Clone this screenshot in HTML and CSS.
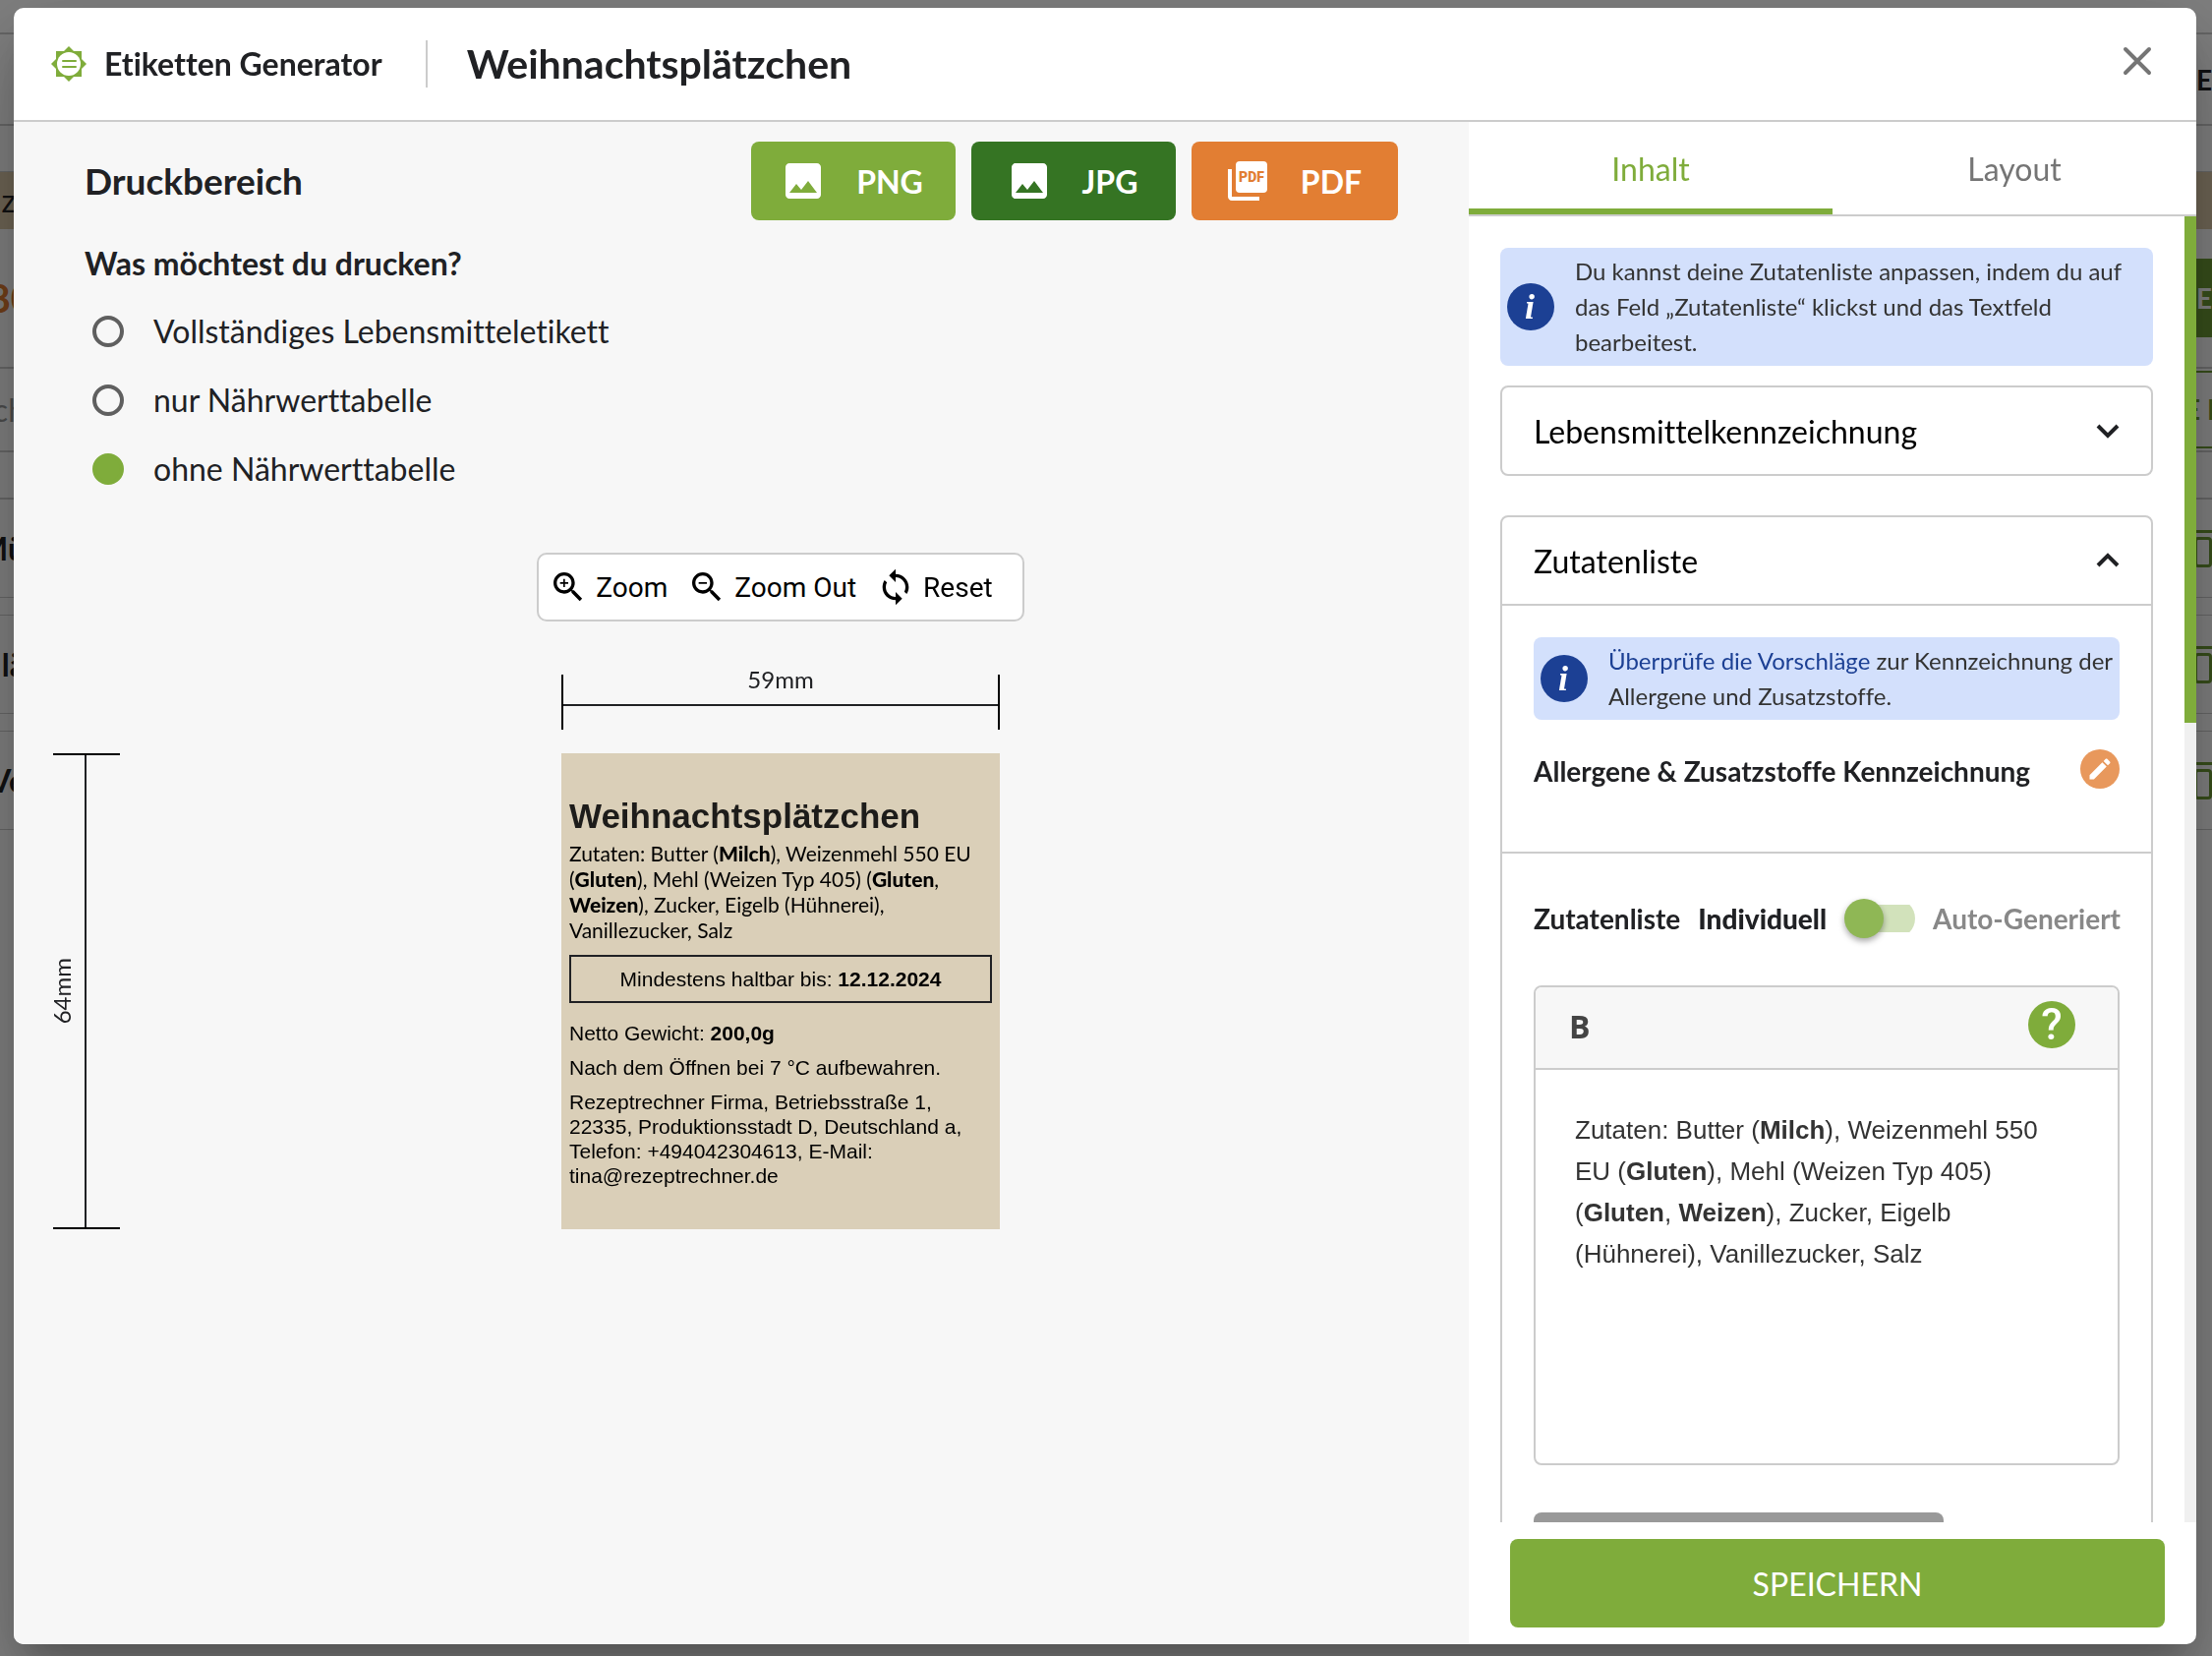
FILE: index.html
```html
<!DOCTYPE html>
<html lang="de">
<head>
<meta charset="utf-8">
<meta name="viewport" content="width=device-width, initial-scale=1">
<title>Etiketten Generator</title>
<link rel="stylesheet" href="styles.css">
</head>
<body>
<div class="page" aria-hidden="true">
  <div class="page-top"></div>
  <div class="page-row page-menu"><span class="page-start"></span><span class="page-end">ME</span></div>
  <div class="page-space"></div>
  <div class="page-row page-band"><span class="page-start">z</span></div>
  <div class="page-row page-hero"><span class="page-start">80</span><span class="page-end page-cta">E</span></div>
  <div class="page-row page-search"><span class="page-start">ch</span><span class="page-end page-outline">E I</span></div>
  <div class="page-space"></div>
  <div class="page-row page-item"><span class="page-start">Mü</span><span class="page-end page-chip"></span></div>
  <div class="page-row page-item"><span class="page-start">lä</span><span class="page-end page-chip"></span></div>
  <div class="page-row page-item"><span class="page-start">Ve</span><span class="page-end page-chip"></span></div>
</div>

<div class="backdrop">
<section class="modal" role="dialog" aria-modal="true" aria-labelledby="recipe">
  <header class="modal-header">
    <div class="brand">
      <svg class="brand-icon" viewBox="0 0 36 36" aria-hidden="true">
        <path fill="#7fac3b" d="M5 5h26v26H5z"/>
        <path fill="#7fac3b" d="M18 0l18 18-18 18L0 18z"/>
        <circle cx="18" cy="18" r="12" fill="#fff"/>
        <path d="M12 15h13M12 21h13" stroke="#7fac3b" stroke-width="2" stroke-linecap="round"/>
      </svg>
      <span>Etiketten Generator</span>
    </div>
    <h1 class="recipe" id="recipe">Weihnachtsplätzchen</h1>
    <button class="close" type="button" aria-label="Schließen">
      <svg viewBox="0 0 32 32"><path d="M4 4l24 24M28 4L4 28" fill="none" stroke="#757575" stroke-width="4" stroke-linecap="round"/></svg>
    </button>
  </header>

  <div class="modal-body">
    <main class="preview">
      <div class="preview-head">
        <h2 class="preview-title">Druckbereich</h2>
        <div class="exports">
          <button class="export export-png" type="button">
            <svg viewBox="0 0 24 24"><path fill="currentColor" d="M21 19V5c0-1.100-.9-2-2-2H5c-1.100 0-2 .9-2 2v14c0 1.100.9 2 2 2h14c1.100 0 2-.9 2-2zM8.500 13.500l2.500 3.010L14.500 12l4.500 6H5l3.500-4.500z"/></svg>
            <span>PNG</span>
          </button>
          <button class="export export-jpg" type="button">
            <svg viewBox="0 0 24 24"><path fill="currentColor" d="M21 19V5c0-1.100-.9-2-2-2H5c-1.100 0-2 .9-2 2v14c0 1.100.9 2 2 2h14c1.100 0 2-.9 2-2zM8.500 13.500l2.500 3.010L14.500 12l4.500 6H5l3.500-4.500z"/></svg>
            <span>JPG</span>
          </button>
          <button class="export export-pdf" type="button">
            <svg viewBox="0 0 48 48" aria-hidden="true">
              <rect x="12" y="4" width="32" height="32" rx="4" fill="currentColor"/>
              <path fill="currentColor" d="M8 12H4v28c0 2.200 1.800 4 4 4h28v-4H8z"/>
              <text class="pdf-mark" x="28" y="25" text-anchor="middle">PDF</text>
            </svg>
            <span>PDF</span>
          </button>
        </div>
      </div>

      <fieldset class="choices">
        <legend>Was möchtest du drucken?</legend>
        <label class="choice"><input type="radio" name="print"><span>Vollständiges Lebensmitteletikett</span></label>
        <label class="choice"><input type="radio" name="print"><span>nur Nährwerttabelle</span></label>
        <label class="choice"><input type="radio" name="print" checked><span>ohne Nährwerttabelle</span></label>
      </fieldset>

      <div class="toolbar">
        <button class="tool" type="button">
          <svg viewBox="0 0 24 24"><path d="M15.500 14h-.79l-.28-.27C15.410 12.590 16 11.110 16 9.500 16 5.910 13.090 3 9.500 3S3 5.910 3 9.500 5.910 16 9.500 16c1.610 0 3.090-.59 4.230-1.570l.27.28v.79l5 4.990L20.490 19l-4.990-5zm-6 0C7.010 14 5 11.990 5 9.500S7.010 5 9.500 5 14 7.010 14 9.500 11.990 14 9.500 14zm2.500-4h-2v2H9v-2H7V9h2V7h1v2h2v1z"/></svg>
          <span>Zoom</span>
        </button>
        <button class="tool" type="button">
          <svg viewBox="0 0 24 24"><path d="M15.500 14h-.79l-.28-.27C15.410 12.590 16 11.110 16 9.500 16 5.910 13.090 3 9.500 3S3 5.910 3 9.500 5.910 16 9.500 16c1.610 0 3.090-.59 4.230-1.570l.27.28v.79l5 4.990L20.490 19l-4.990-5zm-6 0C7.010 14 5 11.990 5 9.500S7.010 5 9.500 5 14 7.010 14 9.500 11.990 14 9.500 14zM7 9h5v1H7z"/></svg>
          <span>Zoom Out</span>
        </button>
        <button class="tool" type="button">
          <svg viewBox="0 0 24 24"><path d="M12 4V1L8 5l4 4V6c3.310 0 6 2.690 6 6 0 1.010-.25 1.970-.7 2.800l1.460 1.460C19.540 15.030 20 13.570 20 12c0-4.420-3.580-8-8-8zm0 14c-3.310 0-6-2.690-6-6 0-1.010.25-1.970.7-2.800L5.240 7.740C4.460 8.970 4 10.430 4 12c0 4.420 3.580 8 8 8v3l4-4-4-4v3z"/></svg>
          <span>Reset</span>
        </button>
      </div>

      <div class="stage">
        <div class="measure-x"><span>59mm</span><div class="ruler-x"></div></div>
        <div class="measure-y"><span>64mm</span><div class="ruler-y"></div></div>
        <article class="label">
          <h3 class="label-title">Weihnachtsplätzchen</h3>
          <p class="label-list">Zutaten: Butter (<b>Milch</b>), Weizenmehl 550 EU (<b>Gluten</b>), Mehl (Weizen Typ 405) (<b>Gluten</b>, <b>Weizen</b>), Zucker, Eigelb (Hühnerei), Vanillezucker, Salz</p>
          <p class="label-date">Mindestens haltbar bis: <b>12.12.2024</b></p>
          <p class="label-text">Netto Gewicht: <b>200,0g</b></p>
          <p class="label-text">Nach dem Öffnen bei 7 °C aufbewahren.</p>
          <p class="label-text">Rezeptrechner Firma, Betriebsstraße 1, 22335, Produktionsstadt D, Deutschland a, Telefon: +494042304613, E-Mail: tina@rezeptrechner.de</p>
        </article>
      </div>
    </main>

    <aside class="settings">
      <div class="tabs" role="tablist">
        <button class="tab tab-active" type="button" role="tab" aria-selected="true">Inhalt</button>
        <button class="tab" type="button" role="tab" aria-selected="false">Layout</button>
      </div>
      <div class="scroll-area">
        <div class="scroll-content">
          <div class="info">
            <svg class="info-icon" viewBox="0 0 48 48" aria-hidden="true"><circle cx="24" cy="24" r="24" fill="#1c4094"/><text x="23" y="36" text-anchor="middle">i</text></svg>
            <p>Du kannst deine Zutatenliste anpassen, indem du auf das Feld „Zutatenliste“ klickst und das Textfeld bearbeitest.</p>
          </div>

          <section class="panel">
            <button class="panel-head" type="button" aria-expanded="false">
              <span>Lebensmittelkennzeichnung</span>
              <svg viewBox="0 0 24 24" aria-hidden="true"><path d="M2 7l10 10L22 7"/></svg>
            </button>
          </section>

          <section class="panel panel-open">
            <button class="panel-head" type="button" aria-expanded="true">
              <span>Zutatenliste</span>
              <svg viewBox="0 0 24 24" aria-hidden="true"><path d="M2 17L12 7l10 10"/></svg>
            </button>
            <div class="panel-part">
              <div class="info">
                <svg class="info-icon" viewBox="0 0 48 48" aria-hidden="true"><circle cx="24" cy="24" r="24" fill="#1c4094"/><text x="23" y="36" text-anchor="middle">i</text></svg>
                <p><a href="#vorschlaege">Überprüfe die Vorschläge</a> zur Kennzeichnung der Allergene und Zusatzstoffe.</p>
              </div>
              <div class="edit-row">
                <h3>Allergene &amp; Zusatzstoffe Kennzeichnung</h3>
                <button class="edit" type="button" aria-label="Bearbeiten">
                  <svg viewBox="0 0 24 24"><path fill="#fff" d="M3 17.250V21h3.750L17.810 9.940l-3.750-3.750L3 17.250zM20.710 7.040c.39-.39.39-1.020 0-1.410l-2.340-2.340c-.39-.39-1.020-.39-1.410 0l-1.830 1.830 3.750 3.750 1.830-1.830z"/></svg>
                </button>
              </div>
            </div>
            <div class="panel-part panel-list">
              <div class="mode">
                <strong>Zutatenliste</strong>
                <label class="mode-switch">
                  <b>Individuell</b>
                  <input type="checkbox" role="switch">
                  <span class="mode-off">Auto-Generiert</span>
                </label>
              </div>
              <div class="editor">
                <div class="editor-bar">
                  <button class="bold" type="button" aria-label="Fett">B</button>
                  <button class="help" type="button" aria-label="Hilfe">?</button>
                </div>
                <div class="editor-text" contenteditable="true" spellcheck="false">Zutaten: Butter (<b>Milch</b>), Weizenmehl 550 EU (<b>Gluten</b>), Mehl (Weizen Typ 405) (<b>Gluten</b>, <b>Weizen</b>), Zucker, Eigelb (Hühnerei), Vanillezucker, Salz</div>
              </div>
              <button class="more" type="button" aria-label="Weitere Optionen"></button>
            </div>
          </section>
        </div>
        <div class="scrollbar" aria-hidden="true"><div class="scroll-thumb"></div></div>
      </div>
      <div class="save-bar"><button class="save" type="button">SPEICHERN</button></div>
    </aside>
  </div>
</section>
</div>
</body>
</html>
```

FILE: styles.css
```css
*,
*::before,
*::after {
  box-sizing: border-box;
}

body,
h1,
h2,
h3,
p,
fieldset {
  margin: 0;
  padding: 0;
  border: 0;
}

body {
  height: 100vh;
  overflow: hidden;
  background: #fff;
  color: #202124;
  font-family: Lato, "Liberation Sans", sans-serif;
  font-size: 32px;
  font-variant-ligatures: none;
}

button {
  padding: 0;
  border: 0;
  background: none;
  color: inherit;
  font: inherit;
  font-variant-ligatures: none;
  cursor: pointer;
}

svg {
  display: block;
  flex: none;
}

/* Page behind the dialog */
.page {
  height: 100vh;
  overflow: hidden;
  line-height: 32px;
}

.page-top {
  height: 35px;
  border-bottom: 2px solid #ccc;
}

.page-row {
  display: flex;
  align-items: center;
  justify-content: space-between;
  overflow: hidden;
}

.page-start {
  display: flex;
  justify-content: flex-end;
  width: 26px;
}

.page-end {
  width: 22px;
  overflow: hidden;
  white-space: nowrap;
}

.page-menu {
  height: 93px;
  border-bottom: 2px solid #ccc;
  font-size: 28px;
  font-weight: 700;
}

.page-menu .page-end {
  display: flex;
  justify-content: flex-end;
}

.page-space {
  height: 47px;
  border-bottom: 1px solid #ccc;
}

.page-band {
  height: 58px;
  background: #dbc8a8;
}

.page-band .page-start {
  width: 16px;
}

.page-hero {
  height: 140px;
  color: #e07c30;
  font-size: 40px;
  font-weight: 700;
}

.page-hero .page-start {
  width: 34px;
}

.page-cta {
  height: 80px;
  background: #6e9c35;
  color: #fff;
  font-size: 28px;
  line-height: 80px;
  text-align: right;
}

.page-search {
  height: 87px;
  border: solid #ccc;
  border-width: 2px 0;
  color: #999;
}

.page-outline {
  width: 28px;
  height: 79px;
  border: solid #6e9c35;
  border-width: 2px 0;
  color: #6e9c35;
  font-size: 28px;
  font-weight: 700;
  line-height: 75px;
}

.page-item {
  height: 101px;
  margin-bottom: 17px;
  border: solid #ccc;
  border-width: 1px 0;
  font-weight: 700;
}

.page-chip {
  width: 18px;
  height: 38px;
  padding-top: 4px;
  border-top: 3px solid #6e9c35;
}

.page-chip::before {
  display: block;
  height: 31px;
  border: 3px solid #6e9c35;
  border-radius: 4px;
  content: "";
}

/* Dialog */
.backdrop {
  position: fixed;
  inset: 0;
  display: flex;
  padding: 8px 16px 12px 14px;
  background: rgba(0, 0, 0, 0.5);
}

.modal {
  display: flex;
  flex: 1;
  flex-direction: column;
  overflow: hidden;
  border-radius: 10px;
  background: #fff;
  box-shadow:
    0 22px 30px -14px rgba(0, 0, 0, 0.2),
    0 48px 76px 6px rgba(0, 0, 0, 0.14),
    0 18px 92px 16px rgba(0, 0, 0, 0.12);
}

.modal-header {
  display: flex;
  align-items: center;
  padding: 32px 38px;
  border-bottom: 2px solid #ccc;
}

.brand {
  display: flex;
  align-items: center;
  gap: 18px;
  padding-right: 44px;
  border-right: 2px solid #ccc;
  font-weight: 700;
  line-height: 48px;
}

.brand-icon {
  width: 36px;
  height: 36px;
}

.recipe {
  flex: 1;
  padding-left: 40px;
  font-size: 41px;
  line-height: 50px;
}

.close {
  align-self: flex-start;
  padding: 6px;
}

.close svg {
  width: 32px;
  height: 32px;
}

.modal-body {
  display: grid;
  flex: 1;
  grid-template-columns: minmax(0, 2fr) minmax(0, 1fr);
  min-height: 0;
}

/* Preview */
.preview {
  display: flex;
  flex-direction: column;
  background: #f7f7f7;
}

.preview-head {
  display: flex;
  align-items: center;
  justify-content: space-between;
  padding: 20px 72px 0;
}

.preview-title {
  font-size: 37px;
  line-height: 48px;
}

.exports {
  display: flex;
  gap: 16px;
}

.export {
  display: flex;
  align-items: center;
  justify-content: center;
  gap: 30px;
  width: 208px;
  height: 80px;
  padding-right: 4px;
  border-radius: 8px;
  color: #fff;
  font-weight: 700;
}

.export svg {
  width: 48px;
  height: 48px;
}

.export-png {
  background: #7fac3b;
}

.export-jpg {
  background: #357423;
}

.export-pdf {
  width: 210px;
  background: #e27e33;
}

.pdf-mark {
  fill: #e27e33;
  font: 900 14px Roboto, sans-serif;
}

.choices {
  display: flex;
  flex-direction: column;
  gap: 30px;
  padding: 29px 72px 0;
}

.choices legend {
  padding: 24px 0 0;
  font-weight: 700;
  line-height: 40px;
}

.choice {
  display: flex;
  align-items: center;
  gap: 30px;
  padding-left: 8px;
  line-height: 40px;
}

.choice input {
  width: 32px;
  height: 32px;
  margin: 0;
  border: 4px solid #5f5f5f;
  border-radius: 50%;
  appearance: none;
}

.choice input:checked {
  border-color: #7fac3b;
  background: #7fac3b;
}

.toolbar {
  display: flex;
  align-items: center;
  align-self: center;
  gap: 20px;
  height: 70px;
  margin: 65px 0 0 80px;
  padding: 0 30px 0 10px;
  border: 2px solid #ccc;
  border-radius: 10px;
  background: #fff;
  color: #000;
  font-family: Roboto, sans-serif;
  font-size: 28px;
}

.tool {
  display: flex;
  align-items: center;
  gap: 8px;
}

.tool svg {
  width: 40px;
  height: 40px;
}

.stage {
  display: grid;
  grid-template-columns: 80px 1fr 446px 1fr;
  row-gap: 24px;
  padding: 44px 0 0;
  font-size: 24px;
}

.measure-x {
  display: flex;
  flex-direction: column;
  grid-column: 3;
  align-items: center;
  line-height: 30px;
}

.ruler-x {
  width: 100%;
  height: 56px;
  margin-top: -20px;
  border: solid #000;
  border-width: 0 2px;
  background: linear-gradient(#202124, #202124) center 30px / 100% 2px no-repeat;
}

.measure-y {
  display: flex;
  grid-column: 1 / 3;
  align-items: center;
  padding-left: 34px;
}

.measure-y span {
  line-height: 30px;
  writing-mode: vertical-rl;
  transform: rotate(180deg);
}

.ruler-y {
  align-self: stretch;
  width: 68px;
  margin-left: -24px;
  border: solid #000;
  border-width: 2px 0;
  background: linear-gradient(#202124, #202124) 32px 0 / 2px 100% no-repeat;
}

.label {
  display: flex;
  flex-direction: column;
  padding: 42px 8px 42px;
  background: #dacfb8;
  color: #000;
  font-family: "Liberation Sans", sans-serif;
  font-size: 21px;
  line-height: 25px;
}

.label-title {
  margin-bottom: 3px;
  color: #1d1c1a;
  font-size: 35px;
  line-height: 44px;
}

.label-list {
  font-family: Lato, sans-serif;
  line-height: 26px;
}

.label-list b,
.mode b {
  font-weight: 900;
}

.label-date {
  margin: 12px 0 8px;
  padding: 10px 0;
  border: 2px solid #202124;
  text-align: center;
}

.label-text {
  margin-top: 10px;
}

/* Settings */
.settings {
  display: flex;
  flex-direction: column;
  min-height: 0;
}

.tabs {
  display: grid;
  grid-template-columns: 1fr 1fr;
  border-bottom: 2px solid #ccc;
}

.tab {
  height: 94px;
  padding-top: 6px;
  border-bottom: 6px solid transparent;
  color: #757575;
}

.tab-active {
  border-color: #7fac3b;
  color: #7fac3b;
}

.scroll-area {
  display: flex;
  flex: 1;
  min-height: 0;
}

.scroll-content {
  flex: 1;
  min-width: 0;
  overflow: hidden;
  padding: 32px;
}

.scrollbar {
  width: 12px;
  background: #f0f0f0;
}

.scroll-thumb {
  height: 38.8%;
  background: #7fac3b;
}

.info {
  display: flex;
  align-items: center;
  gap: 21px;
  padding: 6px 0 6px 7px;
  border-radius: 8px;
  background: #d3e0fc;
  color: #333;
  font-size: 24px;
  line-height: 36px;
}

.info a {
  color: #1c4094;
  text-decoration: none;
}

.info-icon {
  width: 48px;
  height: 48px;
}

.info-icon text {
  fill: #fff;
  font: italic 700 36px "Liberation Serif", serif;
}

.panel {
  margin-top: 20px;
  border: 2px solid #ccc;
  border-radius: 8px;
}

.panel-open {
  margin-top: 40px;
}

.panel-head {
  display: flex;
  align-items: center;
  justify-content: space-between;
  width: 100%;
  height: 88px;
  padding: 0 32px;
  color: #000;
}

.panel-head svg {
  width: 24px;
  height: 24px;
  fill: none;
  stroke: #202124;
  stroke-width: 4;
}

.panel-part {
  height: 252px;
  padding: 32px;
  border-top: 2px solid #ccc;
}

.edit-row {
  display: flex;
  align-items: flex-start;
  justify-content: space-between;
  padding-top: 30px;
}

.edit-row h3 {
  font-size: 28px;
  line-height: 44px;
}

.edit {
  display: grid;
  place-items: center;
  width: 40px;
  height: 40px;
  border-radius: 50%;
  background: #e8985c;
}

.edit svg {
  width: 28px;
  height: 28px;
}

.panel-list {
  height: auto;
  padding-top: 46px;
}

.mode,
.mode-switch {
  display: flex;
  align-items: center;
  gap: 18px;
  font-size: 28px;
  line-height: 40px;
  white-space: nowrap;
}

.mode-off {
  color: #888;
  font-weight: 700;
}

.mode input {
  flex: none;
  width: 72px;
  height: 40px;
  margin: 0;
  background: linear-gradient(#d2e2bb, #d2e2bb) right center / 52px 28px no-repeat;
  border-radius: 20px;
  appearance: none;
}

.mode input::before {
  display: block;
  width: 40px;
  height: 40px;
  border-radius: 50%;
  background: #8fb755;
  box-shadow: 0 3px 6px rgba(0, 0, 0, 0.35);
  content: "";
}

.editor {
  margin-top: 48px;
  overflow: hidden;
  border: 2px solid #ccc;
  border-radius: 8px;
}

.editor-bar {
  display: flex;
  align-items: flex-start;
  justify-content: space-between;
  height: 84px;
  padding: 14px 43px 0 34px;
  border-bottom: 2px solid #ccc;
  background: #f7f7f7;
}

.bold {
  color: #444;
  font-family: "Open Sans", sans-serif;
  font-weight: 700;
  line-height: 52px;
}

.help {
  width: 48px;
  height: 48px;
  border-radius: 50%;
  background: #7fac3b;
  color: #fff;
  font-family: Roboto, sans-serif;
  font-size: 44px;
  font-weight: 500;
  line-height: 48px;
}

.editor-text {
  min-height: 400px;
  padding: 40px;
  color: #333;
  font-family: "Liberation Sans", sans-serif;
  font-size: 26px;
  line-height: 42px;
}

.more {
  display: block;
  width: 70%;
  height: 80px;
  margin-top: 48px;
  border-radius: 8px;
  background: #999;
}

.save-bar {
  padding: 17px 32px 17px 42px;
}

.save {
  width: 100%;
  height: 90px;
  border-radius: 8px;
  background: #7fac3b;
  color: #fff;
}
```
